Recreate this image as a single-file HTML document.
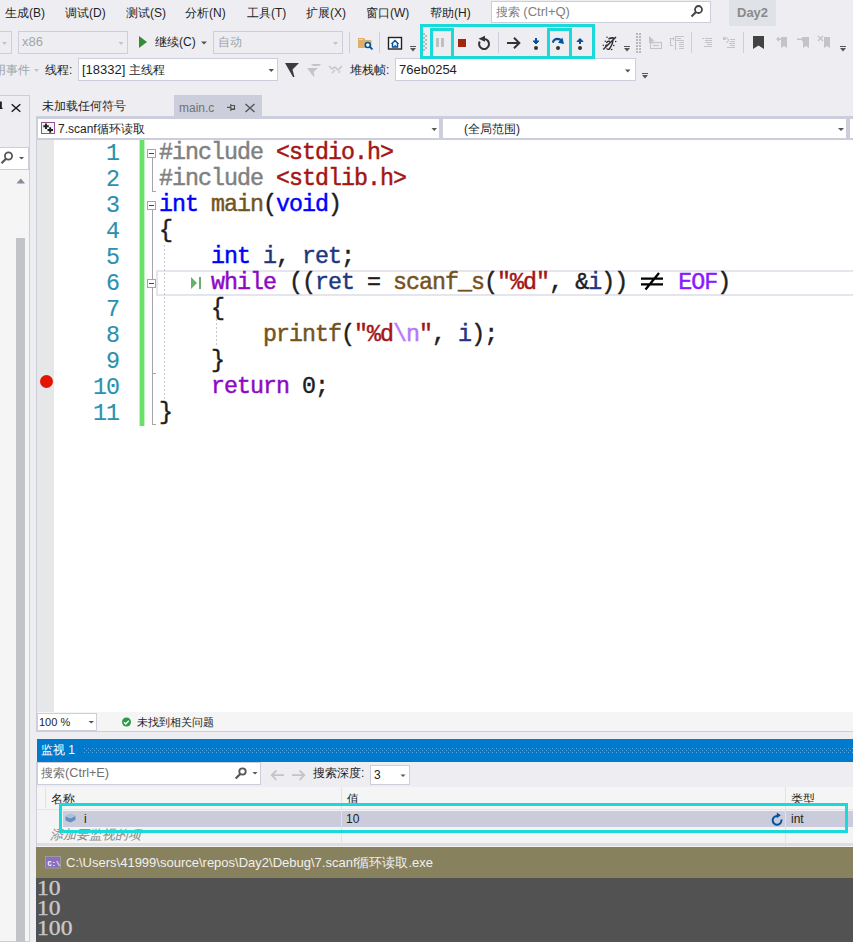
<!DOCTYPE html>
<html><head><meta charset="utf-8">
<style>
*{margin:0;padding:0;box-sizing:border-box}
html,body{width:853px;height:942px;overflow:hidden;background:#eeeef2;font-family:"Liberation Sans",sans-serif;font-size:12px;color:#1e1e1e}
.a{position:absolute}
.t{position:absolute;white-space:nowrap;line-height:14px}
.box{position:absolute;border:1px solid #cccedb}
.code{position:absolute;font-family:"Liberation Mono",monospace;font-size:23.3px;letter-spacing:-0.98px;line-height:26px;white-space:pre;left:159px;margin-top:-1px;-webkit-text-stroke:0.45px}
.ln{position:absolute;font-family:"Liberation Mono",monospace;font-size:23.3px;letter-spacing:-0.98px;line-height:26px;color:#2b91af;width:67px;text-align:right;left:52px;-webkit-text-stroke:0.15px}
.pp{color:#808080}.st{color:#a31515}.kw{color:#0000ff}.fn{color:#74531f}.id{color:#1f377f}.ck{color:#8f08c4}.mc{color:#8a1bff}.es{color:#b776fb}
.ne{display:inline-block;vertical-align:top;width:26px;height:26px;margin-right:-0.98px}
.ob{position:absolute;left:147px;width:9px;height:9px;border:1px solid #a5a5a5;background:#fff}
.ob::after{content:"";position:absolute;left:0.8px;top:3.2px;width:5.5px;height:1.3px;background:#444}
.cy{position:absolute;border:3px solid #19d9d9}
</style></head><body>

<!-- Menu bar -->
<div class="t" style="left:5px;top:6px">生成(B)</div>
<div class="t" style="left:65px;top:6px">调试(D)</div>
<div class="t" style="left:126px;top:6px">测试(S)</div>
<div class="t" style="left:185px;top:6px">分析(N)</div>
<div class="t" style="left:247px;top:6px">工具(T)</div>
<div class="t" style="left:306px;top:6px">扩展(X)</div>
<div class="t" style="left:366px;top:6px">窗口(W)</div>
<div class="t" style="left:430px;top:6px">帮助(H)</div>
<div class="box" style="left:491px;top:1px;width:220px;height:22px;background:#fff"></div>
<div class="t" style="left:496px;top:5px;color:#808080">搜索 <span style="font-size:13px">(Ctrl+Q)</span></div>
<div class="a" style="left:729px;top:0;width:47px;height:26px;background:#dfe2e6"></div>
<div class="t" style="left:737px;top:6px;color:#8a8a8a;font-weight:bold;font-size:13px">Day2</div>

<!-- Toolbar row 2 -->
<div class="box" style="left:-10px;top:31px;width:22px;height:23px"></div>
<div class="box" style="left:18px;top:31px;width:110px;height:23px"></div>
<div class="t" style="left:22px;top:35px;color:#a2a4a5;font-size:13px">x86</div>
<div class="a" style="left:139px;top:36px;width:0;height:0;border-left:8.3px solid #388a34;border-top:6px solid transparent;border-bottom:6px solid transparent"></div>
<div class="t" style="left:155px;top:35px">继续(C)</div>
<div class="box" style="left:213px;top:31px;width:130px;height:23px"></div>
<div class="t" style="left:218px;top:35px;color:#a2a4a5">自动</div>

<!-- Toolbar row 3 -->
<div class="t" style="left:-6px;top:63px;color:#a2a4a5">用事件</div>
<div class="t" style="left:45px;top:63px">线程:</div>
<div class="box" style="left:78px;top:58px;width:200px;height:23px;background:#fff"></div>
<div class="t" style="left:82px;top:63px"><span style="font-size:13px">[18332]</span> 主线程</div>
<div class="t" style="left:350px;top:63px">堆栈帧:</div>
<div class="box" style="left:395px;top:58px;width:241px;height:23px;background:#fff"></div>
<div class="t" style="left:399px;top:63px;font-size:13px">76eb0254</div>

<!-- cyan highlights -->
<div class="cy" style="left:420px;top:24px;width:175px;height:35px"></div>
<div class="cy" style="left:430px;top:28px;width:24px;height:31px"></div>
<div class="cy" style="left:547px;top:28px;width:25px;height:31px"></div>


<!-- toolbar icons -->
<svg class="a" style="left:0;top:0" width="853" height="95" viewBox="0 0 853 95">
<g fill="#c4c4c4">
<path d="M2 42h5l-2.5 3z"/>
<path d="M118.5 42h5l-2.5 3z"/>
<path d="M333 42h5l-2.5 3z"/>
<path d="M34 69h5l-2.5 3z"/>
</g>
<g fill="#555">
<path d="M201 41.5h6l-3 3z"/>
<path d="M268.5 69h5.5l-2.75 3z"/>
<path d="M625 69.5h5.5l-2.75 3z"/>
</g>
<g fill="#cccedb">
<rect x="349" y="32" width="1" height="21"/>
<rect x="379" y="32" width="1" height="21"/>
<rect x="498" y="32" width="1" height="21"/>
<rect x="691" y="32" width="1" height="21"/>
<rect x="743" y="32" width="1" height="21"/>
</g>
<!-- folder -->
<path d="M358 38h6l1.5 2h6v8h-13.5z" fill="#dcb06c"/>
<rect x="359" y="39" width="4" height="1" fill="#f0d9aa"/>
<circle cx="367.8" cy="45" r="2.5" fill="#fff" stroke="#00539c" stroke-width="1.6"/>
<path d="M369.5 46.8l3 2.6" stroke="#00539c" stroke-width="1.8"/>
<!-- home box -->
<rect x="388.5" y="37.5" width="13" height="11.5" fill="#fff" stroke="#222" stroke-width="1.4"/>
<path d="M391.5 44l3.5-3.5 3.5 3.5M392.5 43.5v3.5h5v-3.5" stroke="#00539c" stroke-width="1.5" fill="none"/>
<rect x="394.5" y="45" width="1.2" height="2" fill="#00539c"/>
<!-- overflow glyphs -->
<g fill="#555">
<rect x="410" y="46" width="6" height="1"/><path d="M410 48h6l-3 3.5z"/>
<rect x="624" y="46" width="6" height="1"/><path d="M624 48h6l-3 3.5z"/>
<rect x="840" y="46" width="6" height="1"/><path d="M840 48h6l-3 3.5z"/>
<rect x="642" y="73" width="6" height="1"/><path d="M642 75h6l-3 3.5z"/>
</g>
<!-- grips -->
<g fill="#666">
<circle cx="424" cy="34" r=".75"/><circle cx="426" cy="36" r=".75"/><circle cx="424" cy="38" r=".75"/><circle cx="426" cy="40" r=".75"/><circle cx="424" cy="42" r=".75"/><circle cx="426" cy="44" r=".75"/><circle cx="424" cy="46" r=".75"/><circle cx="426" cy="48" r=".75"/><circle cx="424" cy="50" r=".75"/>
<circle cx="637" cy="34" r=".75"/><circle cx="640" cy="34" r=".75"/><circle cx="637" cy="37" r=".75"/><circle cx="640" cy="37" r=".75"/><circle cx="637" cy="40" r=".75"/><circle cx="640" cy="40" r=".75"/><circle cx="637" cy="43" r=".75"/><circle cx="640" cy="43" r=".75"/><circle cx="637" cy="46" r=".75"/><circle cx="640" cy="46" r=".75"/><circle cx="637" cy="49" r=".75"/><circle cx="640" cy="49" r=".75"/><circle cx="637" cy="52" r=".75"/><circle cx="640" cy="52" r=".75"/>
</g>
<!-- pause -->
<rect x="436" y="38" width="3" height="9" fill="#c0c0c0"/><rect x="441" y="38" width="3" height="9" fill="#c0c0c0"/>
<!-- stop -->
<rect x="458" y="39" width="8" height="8" fill="#a1260d"/>
<!-- restart -->
<path d="M484 39A5 5 0 1 1 479.7 41.5" stroke="#333" stroke-width="2.1" fill="none"/>
<path d="M478.5 38.8L485 35.8V41.8z" fill="#333"/>
<!-- show next statement arrow -->
<path d="M507 43h12.5M514 37.8l5.3 5.2-5.3 5.2" stroke="#333" stroke-width="2" fill="none"/>
<!-- step into -->
<path d="M536 38v5" stroke="#00539c" stroke-width="2"/><path d="M533 41l3 3 3-3z" fill="#00539c" stroke="#00539c" stroke-width="1"/>
<circle cx="536" cy="48" r="2" fill="#333"/>
<!-- step over -->
<path d="M552.8 42.6Q553.8 39 557.5 38.9Q560 38.9 561.3 40.8" stroke="#00539c" stroke-width="2.1" fill="none"/><path d="M562.4 37.6L564 43.9L558 42.7z" fill="#00539c"/>
<circle cx="558" cy="48" r="2" fill="#333"/>
<!-- step out -->
<path d="M580 39v5" stroke="#00539c" stroke-width="2"/><path d="M577 41.5l3-3 3 3z" fill="#00539c" stroke="#00539c" stroke-width="1"/>
<circle cx="580" cy="48" r="2" fill="#333"/>
<!-- hex-ish icon -->
<g stroke="#333" stroke-width="1.5" fill="none"><path d="M603.2 49.5L616 37M608.5 39Q611 37.5 613.5 38Q613 44 609.5 49Q607 49.5 606.5 48.5M610 41.5Q607.5 40.5 606.5 43M608 45Q606 44.5 605.5 46.5"/></g><g fill="#333"><circle cx="607" cy="37.2" r=".8"/><circle cx="605.3" cy="41.2" r=".8"/><circle cx="603.3" cy="45.3" r=".8"/><circle cx="615.7" cy="41.5" r=".8"/><circle cx="613.8" cy="45.5" r=".8"/><circle cx="611.7" cy="49.5" r=".8"/></g>
<!-- disabled right icons -->
<g fill="#c4c4c4">
<path d="M649 36l5.5 5h-2.5l1.8 2.2-1 .8-1.8-2.2-2 1.7z"/>
</g>
<g stroke="#c4c4c4" stroke-width="1.1" fill="none">
<rect x="650.5" y="42.5" width="11" height="6"/><path d="M653 45.5h6"/>
<path d="M673 38.5h-2.5v7h2.5M673.5 37.5v3M675.5 36v14M675.5 36.5h8.5M677 38.5h4M676 40.5h8M679 42.5h5M679 44.5h5M679 46.5h5M679 48.5h5"/>
<path d="M702 38.5h2M705 38.5h7M705 40.5h7M705 42.5h7M707 44.5h5M704 46.5h8"/>
<path d="M730 39.5h5M730 41.5h5M729 43.5h6M730 45.5h5M727 47.5h8M724 38a3 3 0 0 1 4.5 2.5l-2 2.5"/>
</g>
<path d="M723 36.5v3.5h3.5z" fill="#c4c4c4"/>
<!-- bookmarks -->
<path d="M753 36h11v13l-5.5-3.5-5.5 3.5z" fill="#424242"/>
<g fill="#c4c4c4">
<path d="M781 37h6v11l-3-2-3 2z"/><path d="M776 39l3-2.5v2h4v1.5h-4v2z"/>
<path d="M803 37h6v11l-3-2-3 2z"/><path d="M797 38.5h5v-2l3 2.8-3 2.8v-2h-5z"/>
<path d="M824 37h6v11l-3-2-3 2z"/><path d="M818 36l5 5M823 36l-5 5" stroke="#c4c4c4" stroke-width="1.4"/>
</g>
<!-- row 3 icons -->
<path d="M285 63h14l-6.5 6.5 2 7.5h-1.5l-4-7z" fill="#3c3c3c"/>
<g fill="#c4c4c4"><path d="M307 68h11l-4.5 4 1 4.5h-1l-3.5-4.5z"/><path d="M311 64h10l-2 2h-6z"/></g>
<path d="M329 66l3 3 3-2 3 3 4-4M332 73l3-3M339 73l1-2" stroke="#c8c8c8" stroke-width="1.6" fill="none"/>
<!-- search magnifier -->
<circle cx="698.5" cy="9.5" r="3.5" fill="none" stroke="#444" stroke-width="1.8"/><path d="M696 12l-4.5 4.5" stroke="#444" stroke-width="2"/>
</svg>

<!-- Left panel -->
<div class="a" style="left:-1px;top:95px;width:31px;height:847px;border:1px solid #cccedb;background:#f5f5f5"></div>
<div class="a" style="left:0;top:96px;width:29px;height:51px;background:#eeeef2"></div>
<div class="box" style="left:-1px;top:147px;width:30px;height:23px;background:#fff"></div>
<div class="a" style="left:16px;top:238px;width:9px;height:704px;background:#c2c3c9"></div>

<!-- Tabs -->
<div class="t" style="left:42px;top:99px">未加载任何符号</div>
<div class="a" style="left:174px;top:95px;width:88px;height:21px;background:#cccedb"></div>
<div class="t" style="left:179px;top:100.5px;color:#717171">main.c</div>
<div class="a" style="left:36px;top:116px;width:817px;height:3px;background:#cccedb"></div>

<!-- Nav bar -->
<div class="a" style="left:36px;top:119px;width:817px;height:21px;background:#fff;border-left:2px solid #cccedb;border-bottom:2px solid #cccedb"></div>
<div class="a" style="left:439px;top:119px;width:4px;height:19px;background:#cccedb"></div>
<div class="a" style="left:846px;top:119px;width:4px;height:19px;background:#cccedb"></div>
<div class="t" style="left:58px;top:122px">7.scanf循环读取</div>
<div class="t" style="left:464px;top:122px">(全局范围)</div>

<!-- Editor -->
<div class="a" style="left:36px;top:140px;width:817px;height:572px;background:#fff;border-left:1px solid #cccedb"></div>
<div class="a" style="left:37px;top:140px;width:17px;height:572px;background:#e6e7e8"></div>
<div class="a" style="left:139px;top:140px;width:6px;height:286px;background:linear-gradient(90deg,#bff3bf 0 1px,#69e169 1px 5px,#bff3bf 5px 6px)"></div>


<!-- outlining -->
<div class="a" style="left:156px;top:270px;width:700px;height:26px;border:2px solid #e5e5ee;border-right:none"></div>
<div class="ob" style="top:149px"></div>
<div class="ob" style="top:201px"></div>
<div class="ob" style="top:279px"></div>
<div class="a" style="left:152px;top:158px;width:1px;height:33px;background:#a5a5a5"></div>
<div class="a" style="left:152px;top:191px;width:4px;height:1px;background:#a5a5a5"></div>
<div class="a" style="left:152px;top:210px;width:1px;height:69px;background:#a5a5a5"></div>
<div class="a" style="left:152px;top:288px;width:1px;height:137px;background:#a5a5a5"></div>
<div class="a" style="left:152px;top:373px;width:4px;height:1px;background:#a5a5a5"></div>
<div class="a" style="left:152px;top:424px;width:4px;height:1px;background:#a5a5a5"></div>
<div class="a" style="left:164px;top:245px;width:1px;height:155px;background:repeating-linear-gradient(#c8c8c8 0 2px,transparent 2px 4px)"></div>
<div class="a" style="left:216px;top:319px;width:1px;height:28px;background:repeating-linear-gradient(#c8c8c8 0 2px,transparent 2px 4px)"></div>
<div class="a" style="left:191px;top:277px;width:0;height:0;border-left:6px solid #6ab06a;border-top:6px solid transparent;border-bottom:6px solid transparent"></div>
<div class="a" style="left:199px;top:277px;width:1.5px;height:12px;background:#6ab06a"></div>
<div class="a" style="left:39.5px;top:375px;width:13px;height:13px;border-radius:50%;background:#e51400"></div>
<div id="lines" class="a" style="left:0;top:141px">
<div class="ln" style="top:0px">1</div>
<div class="code" style="top:0px"><span class="pp">#include</span> <span class="st">&lt;stdio.h&gt;</span></div>
<div class="ln" style="top:26px">2</div>
<div class="code" style="top:26px"><span class="pp">#include</span> <span class="st">&lt;stdlib.h&gt;</span></div>
<div class="ln" style="top:52px">3</div>
<div class="code" style="top:52px"><span class="kw">int</span> <span class="fn">main</span>(<span class="kw">void</span>)</div>
<div class="ln" style="top:78px">4</div>
<div class="code" style="top:78px">{</div>
<div class="ln" style="top:104px">5</div>
<div class="code" style="top:104px">    <span class="kw">int</span> <span class="id">i</span>, <span class="id">ret</span>;</div>
<div class="ln" style="top:130px">6</div>
<div class="code" style="top:130px">    <span class="ck">while</span> ((<span class="id">ret</span> = <span class="fn">scanf_s</span>(<span class="st">"%d"</span>, &amp;<span class="id">i</span>)) <svg class="ne" width="26" height="26" viewBox="0 0 26 26"><path d="M1 8.7H23M1 14.3H23M5.5 19.5L19 3" stroke="#000" stroke-width="2.3" fill="none"/></svg> <span class="mc">EOF</span>)</div>
<div class="ln" style="top:156px">7</div>
<div class="code" style="top:156px">    {</div>
<div class="ln" style="top:182px">8</div>
<div class="code" style="top:182px">        <span class="fn">printf</span>(<span class="st">"%d</span><span class="es">\n</span><span class="st">"</span>, <span class="id">i</span>);</div>
<div class="ln" style="top:208px">9</div>
<div class="code" style="top:208px">    }</div>
<div class="ln" style="top:234px">10</div>
<div class="code" style="top:234px">    <span class="ck">return</span> 0;</div>
<div class="ln" style="top:260px">11</div>
<div class="code" style="top:260px">}</div>
</div>

<!-- status strip -->
<div class="a" style="left:36px;top:712px;width:817px;height:20px;background:#f5f5f5;border-left:1px solid #cccedb;border-bottom:1px solid #cccedb"></div>
<div class="box" style="left:37px;top:713px;width:60px;height:18px;background:#fff"></div>
<div class="t" style="left:39px;top:715px;font-size:11px;line-height:14px">100 %</div>
<div class="t" style="left:137px;top:715px;font-size:11px;line-height:14px">未找到相关问题</div>

<!-- Watch -->
<div class="a" style="left:37px;top:739px;width:816px;height:23px;background:#007acc"></div>
<div class="t" style="left:41px;top:743px;color:#fff">监视 1</div>
<svg class="a" style="left:84px;top:748px" width="769" height="5"><defs><pattern id="dp" width="4" height="4" patternUnits="userSpaceOnUse"><rect x="0" y="0" width="1" height="1" fill="#5aa8e4"/><rect x="2" y="2" width="1" height="1" fill="#5aa8e4"/></pattern></defs><rect width="769" height="5" fill="url(#dp)"/></svg>
<div class="a" style="left:36px;top:762px;width:817px;height:85px;background:#eeeef2;border-left:1px solid #cccedb"></div>
<div class="box" style="left:37px;top:762px;width:224px;height:23px;background:#fff"></div>
<div class="t" style="left:41px;top:766px;color:#717171">搜索<span style="font-size:12.7px">(Ctrl+E)</span></div>
<div class="t" style="left:313px;top:766px">搜索深度:</div>
<div class="box" style="left:370px;top:765px;width:40px;height:20px;background:#fff"></div>
<div class="t" style="left:374px;top:768px">3</div>
<div class="a" style="left:37px;top:787px;width:816px;height:22px;background:#f5f5f5"></div>
<div class="t" style="left:51px;top:792px">名称</div>
<div class="t" style="left:347px;top:792px">值</div>
<div class="t" style="left:791px;top:792px">类型</div>
<div class="a" style="left:37px;top:809px;width:816px;height:38px;background:#f4f4f4;border-top:1px solid #e3e4ea"></div>
<div class="a" style="left:37px;top:843px;width:816px;height:3px;background:#dedede"></div>
<div class="a" style="left:63px;top:811px;width:790px;height:16px;background:#cbccdb"></div>
<div class="t" style="left:84px;top:812px">i</div>
<div class="t" style="left:346px;top:812px">10</div>
<div class="t" style="left:791px;top:812px">int</div>
<div class="t" style="left:50px;top:828px;color:#8a8a8a;font-style:italic;font-size:13px">添加要监视的项</div>
<div class="cy" style="left:59px;top:803px;width:789px;height:30px"></div>

<!-- Console -->
<div class="a" style="left:36px;top:847px;width:817px;height:31px;background:#88815d"></div>
<div class="t" style="left:66px;top:856px;color:#f0f0f0;font-size:13px">C:\Users\41999\source\repos\Day2\Debug\7.scanf循环读取.exe</div>
<div class="a" style="left:36px;top:878px;width:817px;height:64px;background:#525252"></div>
<div class="a" style="left:37px;top:878px;font-family:'Liberation Serif',serif;font-size:21.5px;line-height:20px;color:#c8c8c8;white-space:pre;-webkit-text-stroke:0.35px;transform:scaleX(1.1);transform-origin:0 0">10
10
100</div>

<!-- lower icons overlay -->
<svg class="a" style="left:0;top:0" width="853" height="942" viewBox="0 0 853 942">
<!-- left panel header -->
<path d="M11.7 104.2l8.6 7.6M20.3 104.2l-8.6 7.6" stroke="#1e1e1e" stroke-width="1.5"/>
<rect x="0" y="101.5" width="1.8" height="7.5" fill="#1e1e1e"/><rect x="0" y="107.8" width="2.6" height="1.2" fill="#1e1e1e"/>
<circle cx="8.5" cy="156" r="3.6" fill="none" stroke="#555" stroke-width="1.8"/><path d="M6 158.8l-4.5 4.5" stroke="#555" stroke-width="2.2"/>
<path d="M19 157h5l-2.5 2.5z" fill="#555"/>
<path d="M16.5 183.5h8.5l-4.25-5z" fill="#868999"/>
<!-- tab pin and close -->
<path d="M227 107.3h3.5M230.8 104v7M231 105.5h3.5v3.8h-3.5" stroke="#555" stroke-width="1.2" fill="none"/><rect x="231" y="108.5" width="4" height="1.4" fill="#555"/>
<path d="M245.5 104l9 8M254.5 104l-9 8" stroke="#555" stroke-width="1.4"/>
<!-- nav bar -->
<rect x="41.5" y="122.5" width="13" height="11" fill="#f4f4f4" stroke="#9b4f96" stroke-width="1"/>
<path d="M46 123.5v5.5M43.3 126.2h5.5M50.2 127.3v5.5M47.5 130h5.5" stroke="#222" stroke-width="1.9"/>
<path d="M431.5 128h5.5l-2.75 3z" fill="#555"/>
<path d="M838 128h6l-3 3z" fill="#555"/>
<!-- status strip -->
<path d="M88.5 721h5.5l-2.75 2.5z" fill="#555"/>
<circle cx="126.5" cy="722" r="4.5" fill="#2a9a48"/>
<path d="M124 722.2l1.8 1.8 3-3.2" stroke="#fff" stroke-width="1.4" fill="none"/>
<!-- watch search -->
<circle cx="242.5" cy="771.5" r="3.2" fill="none" stroke="#555" stroke-width="1.8"/><path d="M240.2 774l-4.5 4.5" stroke="#555" stroke-width="2.2"/>
<path d="M252.5 772h5l-2.5 2.5z" fill="#555"/>
<path d="M284 775.2h-12.5M276.5 770.5l-4.8 4.7 4.8 4.7" stroke="#c4c4c4" stroke-width="1.8" fill="none"/>
<path d="M292 775.2h12.5M299.5 770.5l4.8 4.7-4.8 4.7" stroke="#c4c4c4" stroke-width="1.8" fill="none"/>
<path d="M400.5 774.5h5l-2.5 2.5z" fill="#555"/>
<!-- watch grid -->
<rect x="45" y="787" width="1" height="21" fill="#e2e3ea"/>
<path d="M341.5 787V803M341.5 806V830M341.5 833V847M785.5 787V803M785.5 806V830M785.5 833V847" stroke="#e2e3ea" stroke-width="1"/>
<path d="M65.5 816.5l5-2.5 5 2v4l-5 2.5-5-2z" fill="#6a8ebc"/>
<path d="M65.5 816.5l5-2.5 5 2-5 2.5z" fill="#a9c3e2"/>
<path d="M781.4 819.5A4.4 4.4 0 1 1 777 815.9" fill="none" stroke="#00539c" stroke-width="2"/>
<path d="M776.8 812.4L780.8 815.3L776.8 818.2z" fill="#00539c"/>
<!-- console icon -->
<rect x="45.5" y="856.5" width="15" height="11.5" fill="#8b6fbf" stroke="#9a9a9a" stroke-width="1"/>
<text x="47.5" y="865.5" font-family="Liberation Mono" font-size="7" fill="#fff" font-weight="bold">C:\</text>
</svg>

</body></html>
